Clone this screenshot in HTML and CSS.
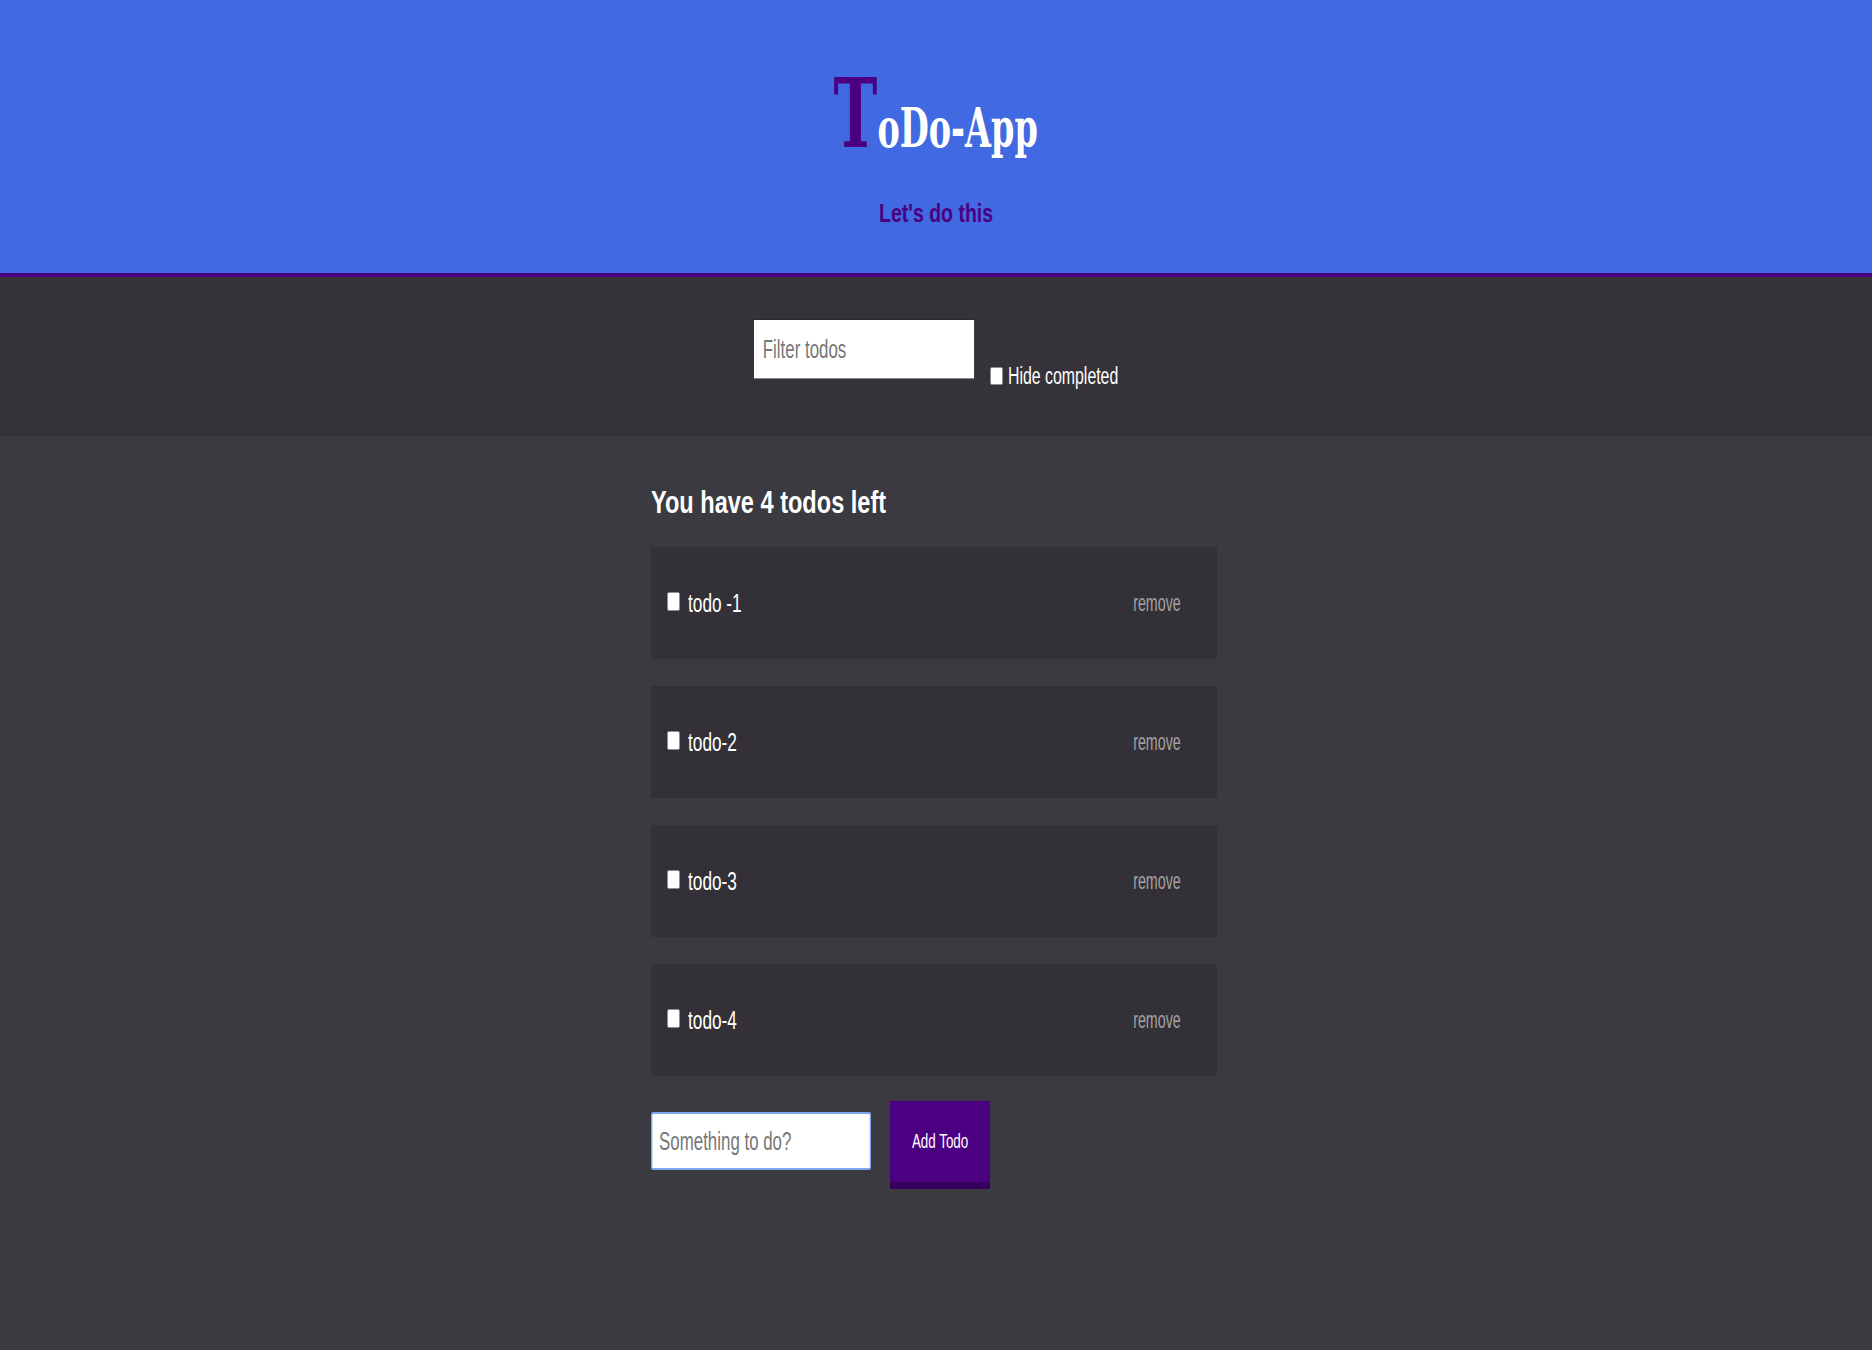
FILE: index.html
```html
<!DOCTYPE html>
<html lang="en">
<head>
<meta charset="utf-8">
<title>ToDo-App</title>
<link rel="stylesheet" href="styles.css">
</head>
<body>
<header class="hero">
  <h1 class="title"><span class="sx title-inner"><span class="title-t">T</span>oDo-App</span></h1>
  <p class="tagline"><span class="sx">Let's do this</span></p>
</header>
<section class="filters">
  <input class="filter-input" type="text" placeholder="Filter todos">
  <label class="hide-label"><input class="check" type="checkbox"><span class="sx hide-text">Hide completed</span></label>
</section>
<main class="main">
  <h2 class="count"><span class="sx">You have 4 todos left</span></h2>
  <ul class="todos">
    <li class="todo"><input class="check" type="checkbox"><span class="sx todo-text">todo -1</span><button class="remove" type="button"><span class="sx">remove</span></button></li>
    <li class="todo"><input class="check" type="checkbox"><span class="sx todo-text">todo-2</span><button class="remove" type="button"><span class="sx">remove</span></button></li>
    <li class="todo"><input class="check" type="checkbox"><span class="sx todo-text">todo-3</span><button class="remove" type="button"><span class="sx">remove</span></button></li>
    <li class="todo"><input class="check" type="checkbox"><span class="sx todo-text">todo-4</span><button class="remove" type="button"><span class="sx">remove</span></button></li>
  </ul>
  <form class="add-form">
    <input class="add-input" type="text" placeholder="Something to do?" autofocus>
    <button class="add-btn" type="submit"><span class="sx">Add Todo</span></button>
  </form>
</main>
</body>
</html>
```

FILE: styles.css
```css
* { box-sizing: border-box; }

body {
  margin: 0;
  min-height: 1350px;
  background: #3c3a41;
  font-family: "Liberation Sans", Arial, sans-serif;
}

.sx {
  display: inline-block;
  white-space: nowrap;
  transform: scaleX(var(--sx, 0.7));
}

/* header */
.hero {
  height: 277px;
  background: #4169e1;
  border-bottom: 4px solid #4b0082;
  padding-top: 66px;
  text-align: center;
}

.title {
  margin: 0;
  height: 96px;
  font-family: "DejaVu Serif", "Liberation Serif", serif;
  font-weight: bold;
  font-size: 54px;
  line-height: 1;
  color: #fff;
}

.title-inner {
  --sx: 0.62;
  transform-origin: center;
}

.title-t {
  font-size: 95px;
  color: #4b0082;
}

.tagline {
  margin: 36px 0 0;
  font-size: 26px;
  line-height: 30px;
  font-weight: bold;
  color: #4b0082;
  --sx: 0.75;
}

/* filter bar */
.filters {
  height: 159px;
  background: #353239;
  display: flex;
  justify-content: center;
  align-items: flex-start;
  padding-top: 42px;
}

.filter-input {
  width: 326px;
  height: 60px;
  margin: 0 -106px 0 0;
  transform: scaleX(0.675);
  transform-origin: left;
  border: 0;
  border-top: 1px solid #2a2a2a;
  border-bottom: 1px solid #8a8a8a;
  padding: 0 0 0 13px;
  background: #fff;
  font: 25px "Liberation Sans", Arial, sans-serif;
  color: #222;
  outline: none;
}

.filter-input::placeholder,
.add-input::placeholder {
  color: #777;
}

.hide-label {
  margin: 46px 0 0 16px;
  display: flex;
  align-items: flex-end;
  font-size: 23px;
  line-height: 23px;
  color: #fff;
}

.check {
  appearance: none;
  -webkit-appearance: none;
  margin: 0 5px 3px 0;
  width: 13px;
  height: 18px;
  background: #fff;
  border: 1px solid #8f8f8f;
  border-radius: 2px;
}

.hide-text {
  --sx: 0.69;
  width: 111px;
  transform-origin: left;
}

/* main */
.main {
  width: 566px;
  margin-left: calc(50% - 285px);
  padding-top: 48px;
}

.count {
  margin: 0 0 27px;
  font-size: 32px;
  line-height: 36px;
  font-weight: bold;
  color: #fff;
  --sx: 0.736;
}

.count .sx { transform-origin: left; }

.todos {
  list-style: none;
  margin: 0;
  padding: 0;
  display: flex;
  flex-direction: column;
  gap: 27px;
}

.todo {
  height: 112px;
  background: #333037;
  display: flex;
  align-items: center;
  padding: 0 36px 0 16px;
}

.todo .check {
  width: 13px;
  height: 19px;
  margin: 0 8px 3px 0;
}

.todo-text {
  --sx: 0.69;
  transform-origin: left;
  font-size: 25px;
  line-height: 25px;
  color: #fff;
}

.remove {
  margin-left: auto;
  padding: 0;
  border: 0;
  background: none;
  color: #a3a3a3;
  font: 23px/23px "Liberation Sans", Arial, sans-serif;
  cursor: pointer;
}

.remove .sx {
  --sx: 0.62;
  transform-origin: right;
}

/* add form */
.add-form {
  margin-top: 25px;
  display: flex;
  align-items: flex-start;
}

.add-input {
  width: 326px;
  height: 58px;
  margin: 11px -106px 0 0;
  transform: scaleX(0.675);
  transform-origin: left;
  border: 2px solid #7aa5ec;
  border-radius: 3px;
  padding: 0 0 0 10px;
  background: #fff;
  font: 25px "Liberation Sans", Arial, sans-serif;
  color: #222;
  caret-color: #000;
  outline: none;
}

.add-btn {
  margin-left: 19px;
  width: 100px;
  height: 88px;
  padding: 0;
  background: #4b0082;
  border: 0;
  border-bottom: 7px solid #36005e;
  color: #fff;
  font: 20px "Liberation Sans", Arial, sans-serif;
  cursor: pointer;
}

.add-btn .sx {
  --sx: 0.67;
  transform-origin: center;
}
```
